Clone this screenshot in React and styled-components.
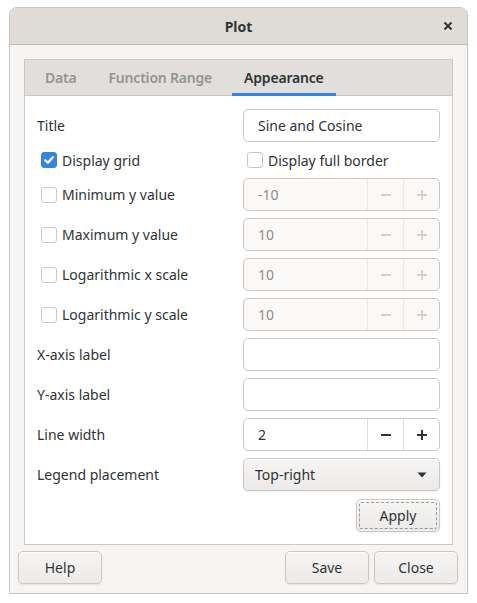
import React, { useState } from "react";
import styled, { createGlobalStyle, css } from "styled-components";

const GlobalStyle = createGlobalStyle`
  html, body {
    margin: 0;
    background: #ffffff;
  }
  body {
    font-family: "Noto Sans", "Open Sans", sans-serif;
    font-size: 14px;
    color: #2e3436;
  }
`;

//icons
const CloseIcon = () => (
  <svg width="10" height="10" viewBox="0 0 10 10">
    <path d="M1.5 1.5 L8.5 8.5 M8.5 1.5 L1.5 8.5" stroke="#2e3436" strokeWidth="2" />
  </svg>
);

const CheckIcon = () => (
  <svg width="12" height="12" viewBox="0 0 12 12">
    <path d="M2.2 6.2 L4.9 8.8 L9.8 3.2" stroke="#fff" strokeWidth="2.2" fill="none" strokeLinecap="round" strokeLinejoin="round" />
  </svg>
);

const ArrowDown = () => (
  <svg width="10" height="6" viewBox="0 0 10 6">
    <path d="M0.5 0.5 L9.5 0.5 L5 5.5 Z" fill="#2e3436" />
  </svg>
);

const MinusIcon = ({ color }) => (
  <svg width="12" height="12" viewBox="0 0 12 12">
    <path d="M1 6 H11" stroke={color} strokeWidth="2" />
  </svg>
);

const PlusIcon = ({ color }) => (
  <svg width="12" height="12" viewBox="0 0 12 12">
    <path d="M1 6 H11 M6 1 V11" stroke={color} strokeWidth="2" />
  </svg>
);

const Spin = ({ value, disabled }) => {
  const glyph = disabled ? "#d3d1ce" : "#2e3436";
  return (
    <SpinBox disabled={disabled}>
      <SpinValue disabled={disabled}>{value}</SpinValue>
      <SpinButton disabled={disabled}>
        <MinusIcon color={glyph} />
      </SpinButton>
      <SpinButton disabled={disabled}>
        <PlusIcon color={glyph} />
      </SpinButton>
    </SpinBox>
  );
};

const Check = ({ checked, label }) => (
  <CheckRow>
    <CheckMark checked={checked}>{checked && <CheckIcon />}</CheckMark>
    <span>{label}</span>
  </CheckRow>
);

const TABS = ["Data", "Function Range", "Appearance"];

const spinRows = [
  { label: "Minimum y value", value: "-10" },
  { label: "Maximum y value", value: "10" },
  { label: "Logarithmic x scale", value: "10" },
  { label: "Logarithmic y scale", value: "10" },
];

const App = () => {
  const [tab, setTab] = useState(2);

  return (
    <>
      <GlobalStyle />
      <Window>
        <TitleBar>
          <Title>Plot</Title>
          <CloseButton>
            <CloseIcon />
          </CloseButton>
        </TitleBar>
        <Body>
          <Notebook>
            <TabBar>
              {TABS.map((t, i) => (
                <Tab key={t} active={i === tab} onClick={() => setTab(i)}>
                  {t}
                </Tab>
              ))}
            </TabBar>
            <Page>
              <Label>Title</Label>
              <Entry>Sine and Cosine</Entry>

              <Check checked label="Display grid" />
              <Check label="Display full border" />

              {spinRows.map((r) => (
                <React.Fragment key={r.label}>
                  <Check label={r.label} />
                  <Spin value={r.value} disabled />
                </React.Fragment>
              ))}

              <Label>X-axis label</Label>
              <Entry />
              <Label>Y-axis label</Label>
              <Entry />

              <Label>Line width</Label>
              <Spin value="2" />

              <Label>Legend placement</Label>
              <Dropdown>
                <span>Top-right</span>
                <ArrowDown />
              </Dropdown>

              <ApplyCell>
                <Button focused width="84px">
                  Apply
                </Button>
              </ApplyCell>
            </Page>
          </Notebook>
        </Body>
        <Actions>
          <Button width="84px">Help</Button>
          <Spacer />
          <Button width="84px">Save</Button>
          <Button width="84px">Close</Button>
        </Actions>
      </Window>
    </>
  );
};

export default App;

const Window = styled.div`
  box-sizing: border-box;
  margin: 7px 0 0 9px;
  width: 459px;
  height: 587px;
  display: flex;
  flex-direction: column;
  background: #f6f5f4;
  border: 1px solid #c6c2be;
  border-radius: 8px 8px 0 0;
  overflow: hidden;
`;

const TitleBar = styled.div`
  box-sizing: border-box;
  height: 37px;
  flex-shrink: 0;
  display: flex;
  align-items: center;
  justify-content: center;
  position: relative;
  background: #dfdcd8;
  border-bottom: 1px solid #bfb8b1;
`;

const Title = styled.div`
  font-weight: 700;
  font-size: 14px;
  color: #2e3436;
`;

const CloseButton = styled.div`
  position: absolute;
  right: 14px;
  top: 13px;
  width: 10px;
  height: 10px;
  display: flex;
`;

const Body = styled.div`
  flex: 1;
  display: flex;
  padding: 14px 14px 0 14px;
`;

const Notebook = styled.div`
  flex: 1;
  display: flex;
  flex-direction: column;
  border: 1px solid #cdc7c2;
  background: #ffffff;
`;

const TabBar = styled.div`
  box-sizing: border-box;
  height: 36px;
  display: flex;
  padding-left: 4px;
  background: #e1dedb;
  border-bottom: 1px solid #cdc7c2;
`;

const Tab = styled.div`
  display: flex;
  align-items: center;
  padding: 0 12px 1px;
  margin: 0 4px -1px;
  font-weight: 600;
  font-size: 14px;
  letter-spacing: -0.2px;
  color: #929595;
  cursor: pointer;
  ${(p) =>
    p.active &&
    css`
      color: #2e3436;
      box-shadow: inset 0 -3px #3584e4;
    `}
`;

const Page = styled.div`
  flex: 1;
  display: grid;
  grid-template-columns: 1fr 197px;
  grid-auto-rows: 33px;
  grid-template-rows: 33px 22px;
  row-gap: 7px;
  align-items: center;
  align-content: start;
  padding: 13px 12px 13px 12px;
`;

const Label = styled.div`
  font-size: 14px;
  color: #2e3436;
`;

const fieldBox = css`
  box-sizing: border-box;
  height: 33px;
  border: 1px solid #cdc7c2;
  border-radius: 5px;
`;

const Entry = styled.div`
  ${fieldBox};
  display: flex;
  align-items: center;
  padding: 0 14px;
  background: #ffffff;
`;

const SpinBox = styled.div`
  ${fieldBox};
  display: flex;
  overflow: hidden;
  background: ${(p) => (p.disabled ? "#faf9f8" : "#ffffff")};
`;

const SpinValue = styled.div`
  flex: 1;
  display: flex;
  align-items: center;
  padding: 0 14px;
  color: ${(p) => (p.disabled ? "#8b8e8f" : "#2e3436")};
`;

const SpinButton = styled.div`
  width: 35px;
  display: flex;
  align-items: center;
  justify-content: center;
  border-left: 1px solid ${(p) => (p.disabled ? "#ebe8e5" : "#e1deda")};
`;

const CheckRow = styled.label`
  display: flex;
  align-items: center;
  gap: 5px;
  padding-left: 4px;
  color: #2e3436;
`;

const CheckMark = styled.span`
  box-sizing: border-box;
  width: 16px;
  height: 16px;
  border-radius: 3px;
  display: flex;
  align-items: center;
  justify-content: center;
  flex-shrink: 0;
  ${(p) =>
    p.checked
      ? css`
          background: #3584e4;
          border: 1px solid #3584e4;
        `
      : css`
          background: #ffffff;
          border: 1px solid #cdc7c2;
        `}
`;

const Button = styled.div`
  box-sizing: border-box;
  width: ${(p) => p.width || "auto"};
  height: 33px;
  display: flex;
  align-items: center;
  justify-content: center;
  font-size: 14px;
  color: #2e3436;
  border: 1px solid #cdc7c2;
  border-radius: 5px;
  background: linear-gradient(to top, #edebe9 2px, #f6f5f4);
  box-shadow: inset 0 1px #ffffff, 0 1px 2px rgba(0, 0, 0, 0.07);
  position: relative;
  ${(p) =>
    p.focused &&
    css`
      outline: 1px dashed rgba(46, 52, 54, 0.45);
      outline-offset: -4px;
    `}
`;

const Dropdown = styled(Button)`
  justify-content: space-between;
  padding: 0 12px 0 11px;
`;

const ApplyCell = styled.div`
  grid-column: 2;
  display: flex;
  justify-content: flex-end;
  margin-top: 1px;
`;

const Actions = styled.div`
  display: flex;
  gap: 5px;
  padding: 6px 9px 9px 8px;
`;

const Spacer = styled.div`
  flex: 1;
`;
